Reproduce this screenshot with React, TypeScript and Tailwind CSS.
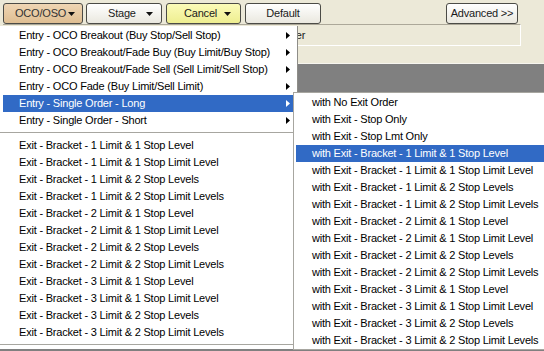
import React from "react";

const FONT = { fontFamily: '"Liberation Sans", Arial, sans-serif' };

const ENTRIES = [
  "Entry - OCO Breakout (Buy Stop/Sell Stop)",
  "Entry - OCO Breakout/Fade Buy (Buy Limit/Buy Stop)",
  "Entry - OCO Breakout/Fade Sell (Sell Limit/Sell Stop)",
  "Entry - OCO Fade (Buy Limit/Sell Limit)",
  "Entry - Single Order - Long",
  "Entry - Single Order - Short",
];

const STOPS = ["1 Stop Level", "1 Stop Limit Level", "2 Stop Levels", "2 Stop Limit Levels"];

// 1..3 limits x 4 stop variants, same order as the menu
const BRACKETS: string[] = [];
for (const n of [1, 2, 3]) {
  for (const s of STOPS) BRACKETS.push(`Bracket - ${n} Limit & ${s}`);
}

const EXITS = [
  "with No Exit Order",
  "with Exit - Stop Only",
  "with Exit - Stop Lmt Only",
  ...BRACKETS.map((b) => `with Exit - ${b}`),
];

function RightArrow({ white }: { white?: boolean }) {
  return (
    <svg width="4" height="7" viewBox="0 0 4 7" className="shrink-0">
      <polygon points="0,0 4,3.5 0,7" fill={white ? "#fff" : "#000"} />
    </svg>
  );
}

function DownArrow() {
  return (
    <svg width="7" height="4" viewBox="0 0 7 4" className="shrink-0">
      <polygon points="0,0 7,0 3.5,4" fill="#111" />
    </svg>
  );
}

function MenuItem({
  label,
  active,
  arrow,
}: {
  label: string;
  active?: boolean;
  arrow?: boolean;
}) {
  return (
    <div
      className={`flex h-[17px] items-center pl-[16px] pr-[3px] whitespace-nowrap ${
        active ? "bg-[#316ac5] text-white" : "text-black"
      }`}
    >
      <span className="flex-1">{label}</span>
      {arrow && <RightArrow white={active} />}
    </div>
  );
}

function Separator() {
  return (
    <div className="flex h-[8px] items-start pt-[3px] -ml-[3px]">
      <div className="h-px w-full bg-[#a7a6a0]" />
    </div>
  );
}

const btn =
  "flex h-[21px] items-center rounded-[3px] border border-[#4b4b46] text-[11px] text-[#1a1a1a]";

export default function App() {
  return (
    <div
      className="relative flex h-[351px] w-[544px] flex-col overflow-hidden bg-[#ece9d8] tracking-[-0.2px]"
      style={FONT}
    >
      {/* toolbar */}
      <div className="flex h-[24px] items-start pl-[3px] pt-[3px]">
        <button className={`${btn} w-[80px] gap-[2px] bg-linear-to-b from-[#efd6b4] to-[#dfbe92] pl-[11px] text-[#333]`}>
          OCO/OSO
          <DownArrow />
        </button>
        <button className={`${btn} ml-[3px] w-[76px] gap-[10px] bg-linear-to-b from-white to-[#eae8df] pl-[21px]`}>
          Stage
          <DownArrow />
        </button>
        <button className={`${btn} ml-[4px] w-[75px] gap-[7px] bg-linear-to-b from-[#fbfbb8] to-[#eeee90] pl-[17px]`}>
          Cancel
          <DownArrow />
        </button>
        <button className={`${btn} ml-[4px] w-[76px] justify-center bg-linear-to-b from-white to-[#eae8df]`}>
          Default
        </button>
        <button className={`${btn} ml-[125px] h-[20px] w-[72px] justify-center bg-linear-to-b from-white to-[#eae8df]`}>
          Advanced &gt;&gt;
        </button>
      </div>

      {/* order panel */}
      <div className="ml-[3px] flex h-[22px] w-[518px] items-center border-t border-r border-b border-t-[#aca899] border-r-white border-b-white pl-[275px] text-[11px] text-[#222]">
        Order
      </div>

      <div className="h-[17px]" />
      <div className="h-px bg-[#f6f5ef]" />
      <div className="flex-1 bg-[#808080]" />

      {/* main dropdown */}
      <div className="absolute left-[-1px] top-[26px] w-[299px] border-r border-[#8e8d88] bg-white px-[4px] pt-px text-[11px]">
        {ENTRIES.map((e, i) => (
          <MenuItem key={e} label={e} arrow active={i === 4} />
        ))}
        <Separator />
        {BRACKETS.map((b) => (
          <MenuItem key={b} label={`Exit - ${b}`} />
        ))}
        <Separator />
      </div>

      {/* submenu */}
      <div className="absolute left-[293px] top-[92px] w-[270px] border border-[#a7a6a0] bg-white px-[2px] pt-px text-[11px]">
        {EXITS.map((e, i) => (
          <MenuItem key={e} label={e} active={i === 3} />
        ))}
      </div>
    </div>
  );
}
